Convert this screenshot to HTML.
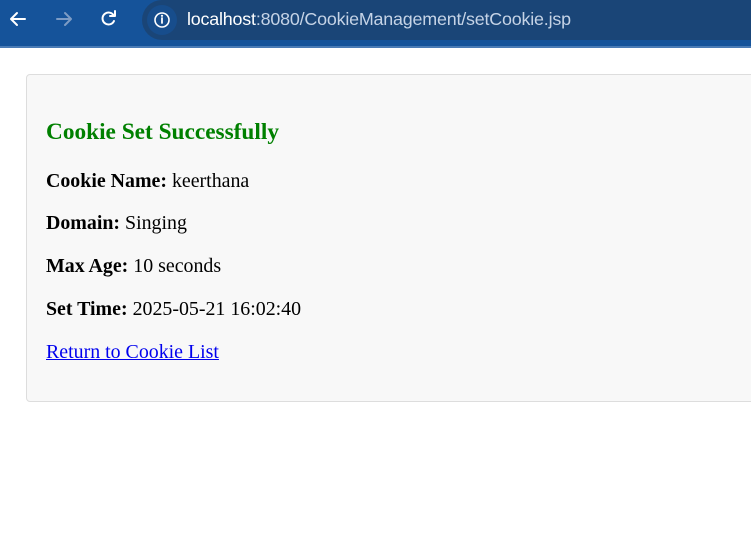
<!DOCTYPE html>
<html><head><style>
body{margin:0;width:751px;height:553px;overflow:hidden;background:#fff;position:relative;font-family:"Liberation Serif",serif}
.tb{position:absolute;left:0;top:0;width:751px;height:46px;background:#15539a}
.ln{position:absolute;left:0;top:46px;width:751px;height:2px;background:#4a7bb5}
.addr{position:absolute;left:142px;top:0;width:640px;height:40px;background:#1a4577;border-radius:20px 0 0 20px}
.ic{position:absolute;left:147px;top:5px;width:30px;height:30px;border-radius:50%;background:#174d8c}
.url{position:absolute;left:187px;top:9px;font:17.9px "Liberation Sans",sans-serif;color:#c5d3e6;letter-spacing:-0.2px}
.url b{font-weight:normal;color:#fff}
.card{position:absolute;left:26px;top:74px;width:740px;height:326px;border:1px solid #ddd;border-radius:4px;background:#f8f8f8}
.t{position:absolute;left:46px;font-size:19.9px;color:#000;white-space:nowrap}
h2{position:absolute;left:46px;top:119px;margin:0;font-size:23.3px;color:#008000;white-space:nowrap}
a{color:#0000ee}
</style></head><body>
<div class="tb"></div><div class="ln"></div>
<div class="addr"></div><div class="ic"></div>
<svg style="position:absolute;left:0;top:0" width="180" height="40">
<g fill="none" stroke-width="2" stroke-linecap="round" stroke-linejoin="round">
<path d="M25 19H11M17 13l-6 6 6 6" stroke="#fff"/>
<path d="M57 19h14M65 13l6 6-6 6" stroke="#7d9cc5"/>
<path d="M114 16a6 6 0 1 0 0 5" stroke="#fff"/><path d="M115 11v5h-5" stroke="#fff"/>
<circle cx="162" cy="20" r="7" stroke="#fff" stroke-width="1.6"/>
<path d="M162 18v5" stroke="#fff" stroke-width="1.8"/></g>
<circle cx="162" cy="15.8" r="1.1" fill="#fff"/>
</svg>
<div class="url"><b>localhost</b>:8080/CookieManagement/setCookie.jsp</div>
<div class="card"></div>
<h2>Cookie Set Successfully</h2>
<div class="t" style="top:170px"><b>Cookie Name:</b> keerthana</div>
<div class="t" style="top:212px"><b>Domain:</b> Singing</div>
<div class="t" style="top:255px"><b>Max Age:</b> 10 seconds</div>
<div class="t" style="top:298px"><b>Set Time:</b> 2025-05-21 16:02:40</div>
<div class="t" style="top:341px"><a href="#">Return to Cookie List</a></div>
</body></html>
